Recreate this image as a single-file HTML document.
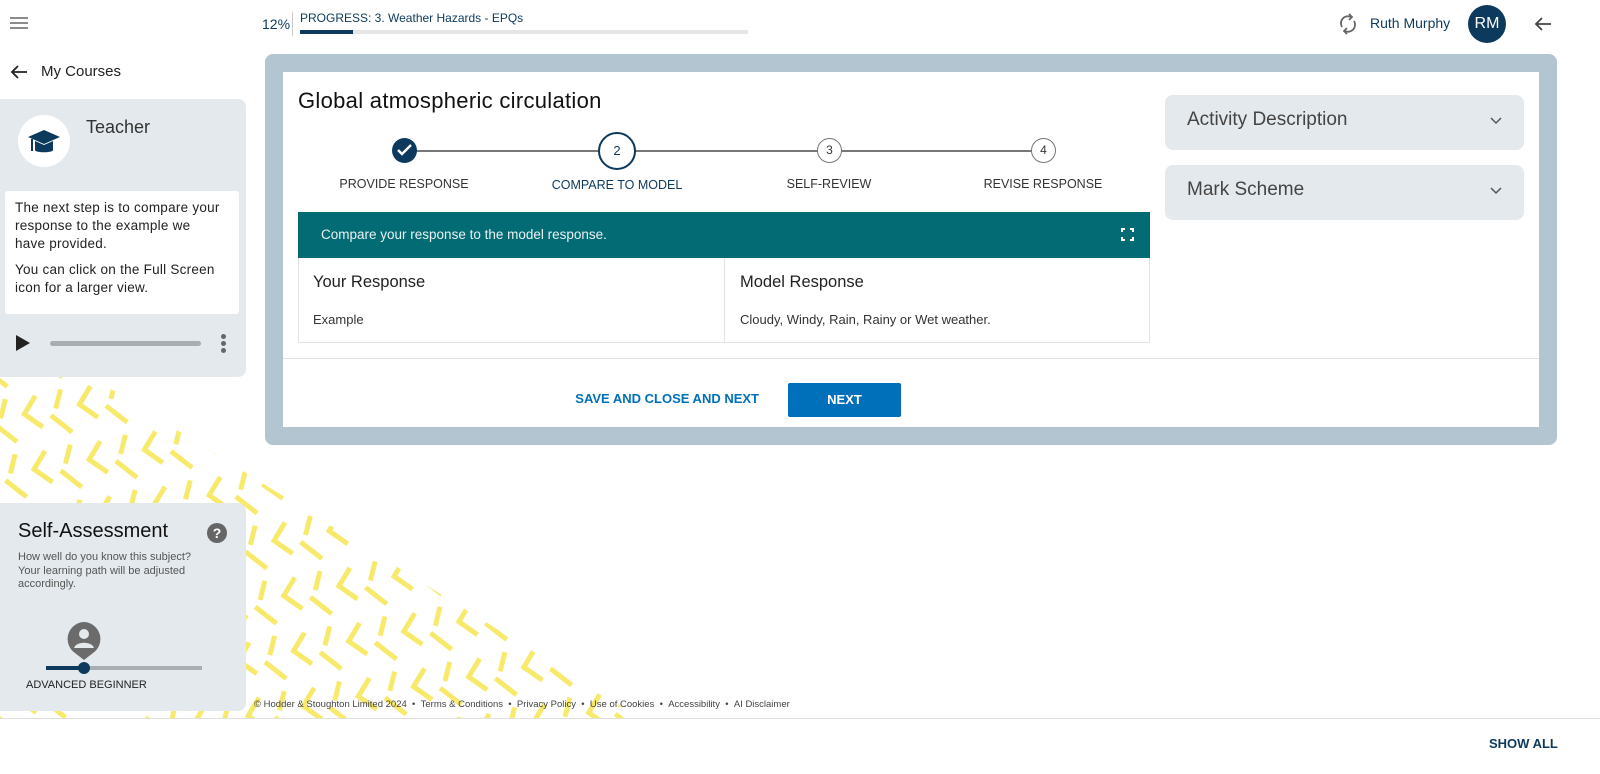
<!DOCTYPE html>
<html><head><meta charset="utf-8"><style>
*{margin:0;padding:0;box-sizing:border-box}
body{width:1600px;height:774px;position:relative;overflow:hidden;background:#fff;font-family:"Liberation Sans",sans-serif;color:#222}
.a{position:absolute;white-space:nowrap}
</style></head><body>
<svg class="a" style="left:0;top:0" width="700" height="774">
<defs>
<pattern id="p" width="56" height="56" patternUnits="userSpaceOnUse" patternTransform="rotate(-10)">
<path d="M22 4 L8 20 L24 36" stroke="#f7e96a" stroke-width="5" fill="none"/>
<path d="M34 26 L52 46" stroke="#f7e96a" stroke-width="5" fill="none"/>
<path d="M48 2 L40 20" stroke="#f7e96a" stroke-width="5" fill="none"/>
</pattern>
<clipPath id="c"><polygon points="0,376 90,376 640,718 0,718"/></clipPath>
</defs>
<rect x="0" y="376" width="700" height="342" fill="url(#p)" clip-path="url(#c)"/>
</svg>

<svg class="a" style="left:10px;top:16px" width="18" height="14"><path d="M0 2h18M0 7h18M0 12h18" stroke="#666" stroke-width="1.6"/></svg>
<div class="a" style="left:262px;top:16px;font-size:14px;color:#0d3a5c">12%</div>
<div class="a" style="left:292px;top:12px;width:1px;height:24px;background:#ccc"></div>
<div class="a" style="left:300px;top:11px;font-size:12px;color:#0d3a5c">PROGRESS: 3. Weather Hazards - EPQs</div>
<div class="a" style="left:300px;top:30px;width:448px;height:4px;background:#e6e6e6"></div>
<div class="a" style="left:300px;top:30px;width:53px;height:4px;background:#0d3a5c"></div>
<svg class="a" style="left:1338px;top:13px" width="20" height="22" viewBox="0 0 20 22"><path d="M4 14a7 7 0 0 1 9-10M16 8a7 7 0 0 1-9 10" stroke="#666" stroke-width="1.8" fill="none"/><path d="M11 1l3 3-3 3M9 21l-3-3 3-3" stroke="#666" stroke-width="1.8" fill="none"/></svg>
<div class="a" style="left:1370px;top:15px;font-size:14px;color:#0d3a5c">Ruth Murphy</div>
<div class="a" style="left:1468px;top:5px;width:38px;height:38px;border-radius:50%;background:#0d3a5c;color:#fff;font-size:16px;line-height:38px;text-align:center">RM</div>
<svg class="a" style="left:1534px;top:16px" width="18" height="16"><path d="M17 8H2M8 2L2 8l6 6" stroke="#444" stroke-width="1.8" fill="none"/></svg>

<svg class="a" style="left:10px;top:64px" width="18" height="16"><path d="M17 8H2M8 2L2 8l6 6" stroke="#222" stroke-width="1.8" fill="none"/></svg>
<div class="a" style="left:41px;top:63px;font-size:15px;color:#222">My Courses</div>
<div class="a" style="left:0;top:99px;width:246px;height:278px;background:#e3e9ed;border-radius:0 8px 8px 0"></div>
<div class="a" style="left:18px;top:115px;width:52px;height:52px;border-radius:50%;background:#fff"></div>
<svg class="a" style="left:26px;top:128px" width="36" height="30" viewBox="0 0 36 30"><path d="M2 9L18 2l16 7-16 7z" fill="#0d3a5c"/><path d="M9 13v9c0 3 18 3 18 0v-9l-9 4z" fill="#0d3a5c"/><path d="M6 11v12" stroke="#0d3a5c" stroke-width="2"/></svg>
<div class="a" style="left:86px;top:117px;font-size:18px;color:#333">Teacher</div>
<div class="a" style="left:5px;top:191px;width:234px;height:123px;background:#fff;border-radius:3px"></div>
<div class="a" style="left:15px;top:199px;font-size:13.5px;line-height:18px;color:#222;letter-spacing:0.25px">The next step is to compare your<br>response to the example we<br>have provided.</div>
<div class="a" style="left:15px;top:261px;font-size:13.5px;line-height:18px;color:#222;letter-spacing:0.25px">You can click on the Full Screen<br>icon for a larger view.</div>
<svg class="a" style="left:16px;top:335px" width="14" height="16"><path d="M0 0L14 8L0 16z" fill="#222"/></svg>
<div class="a" style="left:50px;top:341px;width:151px;height:5px;border-radius:3px;background:#a9aeb2"></div>
<div class="a" style="left:221px;top:334px;width:5px;height:5px;border-radius:50%;background:#666;box-shadow:0 7px 0 #666,0 14px 0 #666"></div>

<div class="a" style="left:0;top:503px;width:246px;height:208px;background:#e3e9ed;border-radius:0 8px 8px 0"></div>
<div class="a" style="left:18px;top:520px;font-size:20px;color:#111">Self-Assessment</div>
<div class="a" style="left:207px;top:523px;width:20px;height:20px;border-radius:50%;background:#666;color:#fff;font-size:14px;font-weight:bold;text-align:center;line-height:20px">?</div>
<div class="a" style="left:18px;top:551px;font-size:11px;line-height:13.5px;color:#555">How well do you know this subject?<br>Your learning path will be adjusted<br>accordingly.</div>
<svg class="a" style="left:66px;top:621px" width="36" height="40" viewBox="0 0 36 40"><path d="M18 1a17 17 0 0 1 9 31l-9 7-9-7A17 17 0 0 1 18 1z" fill="#6b6b6b"/><circle cx="18" cy="13" r="5" fill="#e3e9ed"/><path d="M8 27c2-7 18-7 20 0" fill="#e3e9ed"/></svg>
<div class="a" style="left:46px;top:666px;width:156px;height:4px;background:#a9aeb2"></div>
<div class="a" style="left:46px;top:666px;width:38px;height:4px;background:#0d3a5c"></div>
<div class="a" style="left:78px;top:662px;width:12px;height:12px;border-radius:50%;background:#0d3a5c"></div>
<div class="a" style="left:26px;top:679px;font-size:11px;color:#222">ADVANCED BEGINNER</div>

<div class="a" style="left:265px;top:54px;width:1292px;height:391px;background:#b3c5d1;border-radius:8px"></div>
<div class="a" style="left:283px;top:72px;width:1256px;height:355px;background:#fff"></div>
<div class="a" style="left:298px;top:88px;font-size:22px;color:#111;letter-spacing:0.3px">Global atmospheric circulation</div>
<div class="a" style="left:404px;top:150px;width:640px;height:1.5px;background:#777"></div>
<div class="a" style="left:392px;top:138px;width:25px;height:25px;border-radius:50%;background:#0d3a5c"></div>
<svg class="a" style="left:396px;top:143px" width="17" height="14"><path d="M2 7l4 4 9-9" stroke="#fff" stroke-width="2.4" fill="none"/></svg>
<div class="a" style="left:598px;top:132px;width:38px;height:38px;border-radius:50%;background:#fff;border:2px solid #0d3a5c;text-align:center;line-height:34px;font-size:13px;color:#0d3a5c">2</div>
<div class="a" style="left:817px;top:138px;width:25px;height:25px;border-radius:50%;background:#fff;border:1.5px solid #777;text-align:center;line-height:22px;font-size:12px;color:#333">3</div>
<div class="a" style="left:1031px;top:138px;width:25px;height:25px;border-radius:50%;background:#fff;border:1.5px solid #777;text-align:center;line-height:22px;font-size:12px;color:#333">4</div>
<div class="a" style="left:304px;top:177px;width:200px;text-align:center;font-size:12.5px;color:#333">PROVIDE RESPONSE</div>
<div class="a" style="left:517px;top:178px;width:200px;text-align:center;font-size:12.5px;color:#0d3a5c">COMPARE TO MODEL</div>
<div class="a" style="left:729px;top:177px;width:200px;text-align:center;font-size:12.5px;color:#333">SELF-REVIEW</div>
<div class="a" style="left:943px;top:177px;width:200px;text-align:center;font-size:12.5px;color:#333">REVISE RESPONSE</div>

<div class="a" style="left:298px;top:212px;width:852px;height:46px;background:#036b73"></div>
<div class="a" style="left:321px;top:227px;font-size:13.5px;color:#e8f2f3">Compare your response to the model response.</div>
<svg class="a" style="left:1121px;top:228px" width="13" height="13"><path d="M1 4V1h3M9 1h3v3M12 9v3H9M4 12H1V9" stroke="#fff" stroke-width="2" fill="none"/></svg>
<div class="a" style="left:298px;top:258px;width:852px;height:85px;border:1px solid #e2e2e2;border-top:none"></div>
<div class="a" style="left:724px;top:258px;width:1px;height:85px;background:#e2e2e2"></div>
<div class="a" style="left:313px;top:273px;font-size:16.5px;color:#222">Your Response</div>
<div class="a" style="left:313px;top:312px;font-size:13px;color:#333">Example</div>
<div class="a" style="left:740px;top:273px;font-size:16.5px;color:#222">Model Response</div>
<div class="a" style="left:740px;top:312px;font-size:13px;color:#333">Cloudy, Windy, Rain, Rainy or Wet weather.</div>
<div class="a" style="left:283px;top:358px;width:1256px;height:1px;background:#e2e2e2"></div>
<div class="a" style="left:560px;top:391px;width:199px;text-align:right;font-size:13px;font-weight:bold;color:#0070bb">SAVE AND CLOSE AND NEXT</div>
<div class="a" style="left:788px;top:383px;width:113px;height:34px;background:#0070bb;border-radius:2px;color:#fff;font-size:13px;font-weight:bold;text-align:center;line-height:34px">NEXT</div>

<div class="a" style="left:1165px;top:95px;width:359px;height:55px;background:#e3e9ed;border-radius:8px"></div>
<div class="a" style="left:1187px;top:109px;font-size:19px;color:#444">Activity Description</div>
<svg class="a" style="left:1490px;top:117px" width="12" height="8"><path d="M1 1l5 5 5-5" stroke="#555" stroke-width="1.5" fill="none"/></svg>
<div class="a" style="left:1165px;top:165px;width:359px;height:55px;background:#e3e9ed;border-radius:8px"></div>
<div class="a" style="left:1187px;top:179px;font-size:19px;color:#444">Mark Scheme</div>
<svg class="a" style="left:1490px;top:187px" width="12" height="8"><path d="M1 1l5 5 5-5" stroke="#555" stroke-width="1.5" fill="none"/></svg>

<div class="a" style="left:254px;top:699px;font-size:9.5px;color:#444">© Hodder &amp; Stoughton Limited 2024 &nbsp;• &nbsp;Terms &amp; Conditions &nbsp;• &nbsp;Privacy Policy &nbsp;• &nbsp;Use of Cookies &nbsp;• &nbsp;Accessibility &nbsp;• &nbsp;AI Disclaimer</div>
<div class="a" style="left:0;top:718px;width:1600px;height:1px;background:#e0e0e0"></div>
<div class="a" style="left:1489px;top:736px;font-size:13px;font-weight:bold;color:#0d3a5c">SHOW ALL</div>
</body></html>
